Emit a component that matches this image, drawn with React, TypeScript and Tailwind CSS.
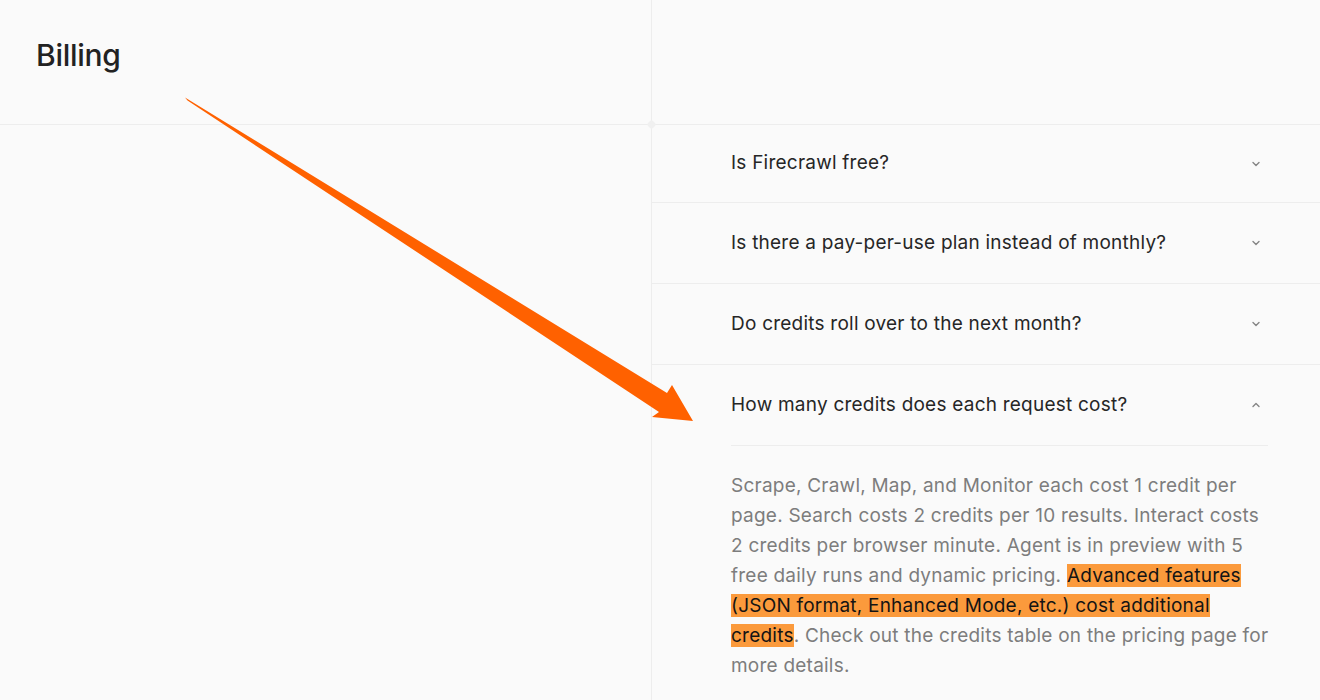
import { FC } from "react";

const FONT = { fontFamily: "Inter, 'Noto Sans', sans-serif" };

interface FaqItemProps {
  question: string;
  first?: boolean;
}

const Chevron: FC<{ up?: boolean }> = ({ up }) => (
  <svg
    width="12"
    height="12"
    viewBox="0 0 12 12"
    fill="none"
    stroke="#858585"
    strokeWidth="1.4"
    strokeLinecap="round"
    strokeLinejoin="round"
  >
    {up ? <path d="M3 7.5 6 4.5 9 7.5" /> : <path d="M3 4.5 6 7.5 9 4.5" />}
  </svg>
);

const FaqItem: FC<FaqItemProps> = ({ question, first }) => (
  <div className="border-b border-[#ededed]">
    <button
      className={
        first
          ? "flex h-[77px] w-full items-center justify-between pl-[79px] pr-[58px] text-left"
          : "flex h-[80px] w-full items-center justify-between pl-[79px] pr-[58px] text-left"
      }
    >
      <span className="text-[19px] tracking-[0.012em] text-[#262626]">{question}</span>
      <Chevron />
    </button>
  </div>
);

const Highlight: FC<{ children: React.ReactNode }> = ({ children }) => (
  <mark className="bg-[#fb9a3c] text-[#141414]">{children}</mark>
);

const OpenItem: FC = () => (
  <div className="pl-[79px] pr-[52px]">
    <button className="flex h-[81px] w-full items-center justify-between border-b border-[#ededed] pr-[6px] text-left">
      <span className="text-[19px] tracking-[0.012em] text-[#262626]">
        How many credits does each request cost?
      </span>
      <Chevron up />
    </button>
    <p className="mr-[-5px] pt-[25px] text-[19px] leading-[30px] tracking-[0.012em] text-[#7d7d7d]">
      Scrape, Crawl, Map, and Monitor each cost 1 credit per page. Search costs 2
      credits per 10 results. Interact costs 2 credits per browser minute. Agent is
      in preview with 5 free daily runs and dynamic pricing.{" "}
      <Highlight>
        Advanced features (JSON format, Enhanced Mode, etc.) cost additional credits
      </Highlight>
      . Check out the credits table on the pricing page for more details.
    </p>
  </div>
);

const Arrow: FC = () => (
  <svg
    className="pointer-events-none absolute left-0 top-0"
    width="1320"
    height="700"
    viewBox="0 0 1320 700"
  >
    <polygon
      fill="#ff6100"
      points="185,97.5 187.5,100.5 659,412 652,417 693,421 672,385 667,393"
    />
  </svg>
);

export default function App() {
  return (
    <div className="relative flex h-[700px] w-[1320px] overflow-hidden bg-[#fafafa]" style={FONT}>
      <div className="w-[652px] shrink-0 border-r border-[#ededed]">
        <div className="flex h-[125px] items-start border-b border-[#ededed] pl-[36px] pt-[35px]">
          <h2 className="text-[30px] font-medium leading-[40px] tracking-[-0.01em] text-[#222]">
            Billing
          </h2>
        </div>
      </div>
      <div className="flex-1">
        <div className="h-[125px] border-b border-[#ededed]" />
        <FaqItem first question="Is Firecrawl free?" />
        <FaqItem question="Is there a pay-per-use plan instead of monthly?" />
        <FaqItem question="Do credits roll over to the next month?" />
        <OpenItem />
      </div>
      <div className="absolute left-[648px] top-[121px] h-[7px] w-[7px] rotate-45 rounded-[2px] bg-[#f0f0f0]" />
      <Arrow />
    </div>
  );
}
